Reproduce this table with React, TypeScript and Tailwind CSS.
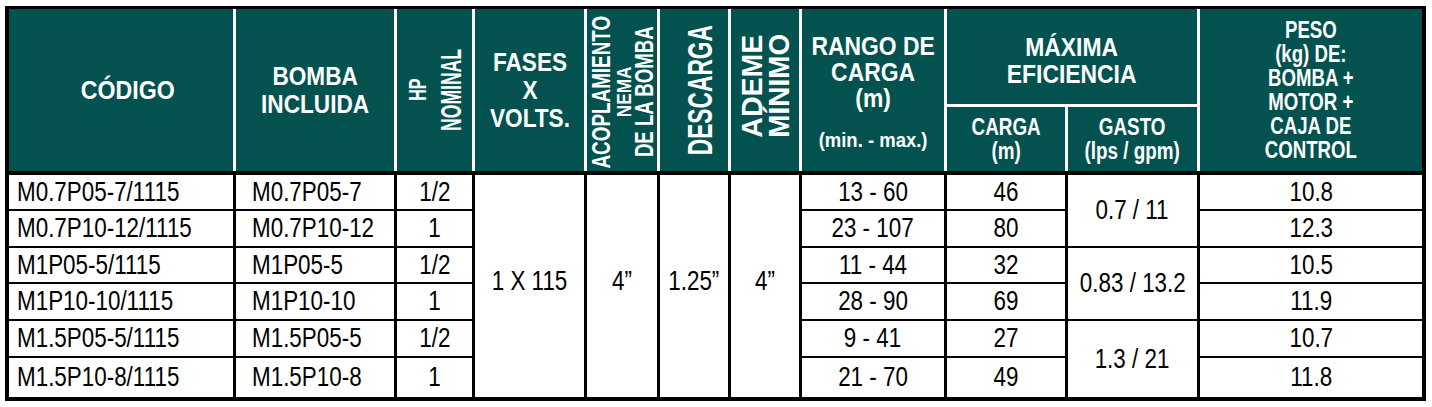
import React from "react";

const sans = "font-['Liberation_Sans',Arial,sans-serif]";
const head = `bg-[#03524f] text-white font-bold ${sans} flex items-center justify-center text-center`;
const cell = `bg-white text-black ${sans} text-[27px] leading-none flex items-center whitespace-nowrap`;
const vert = "[writing-mode:vertical-rl] rotate-180 whitespace-nowrap block";
const squeeze = "inline-block whitespace-nowrap";

const rows = [
  { code: "M0.7P05-7/1115", pump: "M0.7P05-7", hp: "1/2", range: "13 - 60", carga: "46", peso: "10.8" },
  { code: "M0.7P10-12/1115", pump: "M0.7P10-12", hp: "1", range: "23 - 107", carga: "80", peso: "12.3" },
  { code: "M1P05-5/1115", pump: "M1P05-5", hp: "1/2", range: "11 - 44", carga: "32", peso: "10.5" },
  { code: "M1P10-10/1115", pump: "M1P10-10", hp: "1", range: "28 - 90", carga: "69", peso: "11.9" },
  { code: "M1.5P05-5/1115", pump: "M1.5P05-5", hp: "1/2", range: "9 - 41", carga: "27", peso: "10.7" },
  { code: "M1.5P10-8/1115", pump: "M1.5P10-8", hp: "1", range: "21 - 70", carga: "49", peso: "11.8" },
];

const gasto = ["0.7 / 11", "0.83 / 13.2", "1.3 / 21"];

const cols = "grid-cols-[224px_158px_75px_109px_70px_68px_68px_142px_118px_129px_222px]";

function Txt({ children, left }: { children: React.ReactNode; left?: boolean }) {
  return <span className={`${squeeze} scale-x-[0.83] ${left ? "origin-left" : "origin-center"}`}>{children}</span>;
}

function HeaderRow() {
  return (
    <div className={`grid ${cols} grid-rows-[95px_64px] gap-[3px] h-[166px] bg-white border-b-[4px] border-black`}>
      <div className={`${head} row-span-2 text-[26px] pl-[14px]`}>
        <span className={`${squeeze} scale-x-[0.89]`}>CÓDIGO</span>
      </div>
      <div className={`${head} row-span-2 text-[26px] leading-[28px]`}>
        <span className={`${squeeze} scale-x-[0.87]`}>
          BOMBA
          <br />
          INCLUIDA
        </span>
      </div>
      <div className={`${head} row-span-2 gap-[6px] pl-[2px]`}>
        <span className={`${vert} text-[24px] leading-[24px] scale-y-[0.67]`}>HP</span>
        <span className={`${vert} text-[30px] leading-[30px] scale-y-[0.585]`}>NOMINAL</span>
      </div>
      <div className={`${head} row-span-2 text-[26px] leading-[28px]`}>
        <span className={`${squeeze} scale-x-[0.87]`}>
          FASES
          <br />X<br />
          VOLTS.
        </span>
      </div>
      <div className={`${head} row-span-2 pt-[4px]`}>
        <span className={`${vert} text-[25px] leading-[23px] scale-y-[0.755]`}>ACOPLAMIENTO</span>
        <span className={`${vert} text-[21px] leading-[21px] scale-y-[0.82]`}>NEMA</span>
        <span className={`${vert} text-[25px] leading-[20px] scale-y-[0.745]`}>DE LA BOMBA</span>
      </div>
      <div className={`${head} row-span-2 pl-[10px]`}>
        <span className={`${vert} text-[35px] leading-[35px] scale-y-[0.65]`}>DESCARGA</span>
      </div>
      <div className={`${head} row-span-2 pb-[8px]`}>
        <span className={`${vert} text-[30px] leading-[27px] scale-y-[0.95]`}>ADEME</span>
        <span className={`${vert} text-[30px] leading-[27px] scale-y-[0.93]`}>MÍNIMO</span>
      </div>
      <div className={`${head} row-span-2 pt-[6px]`}>
        <div className="flex flex-col items-center whitespace-nowrap scale-x-[0.88] text-[26px] leading-[26px]">
          <span>RANGO DE</span>
          <span>CARGA</span>
          <span>(m)</span>
          <span className="text-[21px] mt-[16px]">(min. - max.)</span>
        </div>
      </div>
      <div className={`${head} col-span-2 text-[26px] leading-[27px] pt-[8px]`}>
        <span className={`${squeeze} scale-x-[0.88]`}>
          MÁXIMA
          <br />
          EFICIENCIA
        </span>
      </div>
      <div className={`${head} row-span-2 text-[23px] leading-[24px]`}>
        <span className={`${squeeze} scale-x-[0.81]`}>
          PESO
          <br />
          (kg) DE:
          <br />
          BOMBA +
          <br />
          MOTOR +
          <br />
          CAJA DE
          <br />
          CONTROL
        </span>
      </div>
      <div className={`${head} text-[23px] leading-[24px]`}>
        <span className={`${squeeze} scale-x-[0.82]`}>
          CARGA
          <br />
          (m)
        </span>
      </div>
      <div className={`${head} text-[23px] leading-[24px]`}>
        <span className={`${squeeze} scale-x-[0.82]`}>
          GASTO
          <br />
          (lps / gpm)
        </span>
      </div>
    </div>
  );
}

function BodyRows() {
  return (
    <div className={`grid ${cols} grid-rows-[34px_35px_34px_35px_35px_39px] gap-x-[3px] gap-y-[2px] bg-black`}>
      {rows.map((r, i) => (
        <React.Fragment key={r.code}>
          <div className={`${cell} pl-[8px]`}>
            <Txt left>{r.code}</Txt>
          </div>
          <div className={`${cell} pl-[16px]`}>
            <Txt left>{r.pump}</Txt>
          </div>
          <div className={`${cell} justify-center`}>
            <Txt>{r.hp}</Txt>
          </div>
          {i === 0 && (
            <>
              <div className={`${cell} row-span-6 justify-center pb-[10px]`}>
                <Txt>1 X 115</Txt>
              </div>
              <div className={`${cell} row-span-6 justify-center pb-[10px]`}>
                <Txt>4”</Txt>
              </div>
              <div className={`${cell} row-span-6 justify-center pb-[10px]`}>
                <Txt>1.25”</Txt>
              </div>
              <div className={`${cell} row-span-6 justify-center pb-[10px]`}>
                <Txt>4”</Txt>
              </div>
            </>
          )}
          <div className={`${cell} justify-center`}>
            <Txt>{r.range}</Txt>
          </div>
          <div className={`${cell} justify-center`}>
            <Txt>{r.carga}</Txt>
          </div>
          {i % 2 === 0 && (
            <div className={`${cell} row-span-2 justify-center`}>
              <Txt>{gasto[i / 2]}</Txt>
            </div>
          )}
          <div className={`${cell} justify-center`}>
            <Txt>{r.peso}</Txt>
          </div>
        </React.Fragment>
      ))}
    </div>
  );
}

export default function App() {
  return (
    <div className="w-[1432px] h-[407px] bg-white pt-[6px] pl-[5px]">
      <div className="w-[1421px] border-[4px] border-t-[3px] border-black bg-white">
        <HeaderRow />
        <BodyRows />
      </div>
    </div>
  );
}
